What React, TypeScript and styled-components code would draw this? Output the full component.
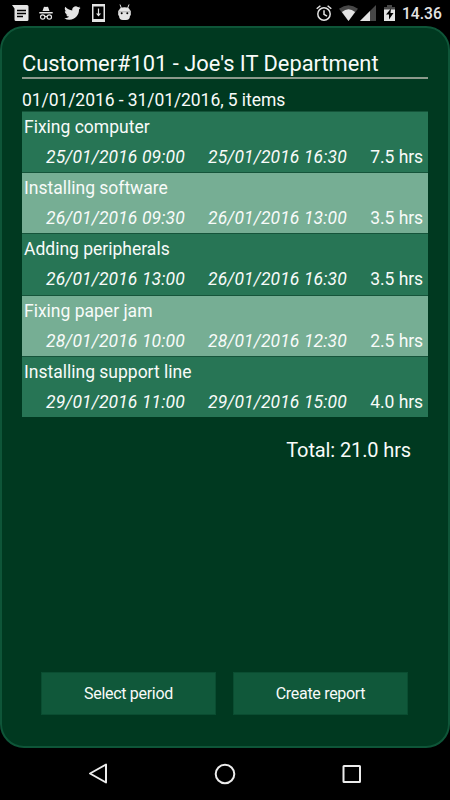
import styled, { createGlobalStyle } from "styled-components";

const GlobalStyle = createGlobalStyle`
  body {
    margin: 0;
    background: #000;
    font-family: Roboto, "Liberation Sans", sans-serif;
    color: #f8fbf9;
  }
  * {
    box-sizing: border-box;
  }
`;

interface WorkItem {
  name: string;
  start: string;
  end: string;
  hours: string;
}

const items: WorkItem[] = [
  { name: "Fixing computer", start: "25/01/2016 09:00", end: "25/01/2016 16:30", hours: "7.5 hrs" },
  { name: "Installing software", start: "26/01/2016 09:30", end: "26/01/2016 13:00", hours: "3.5 hrs" },
  { name: "Adding peripherals", start: "26/01/2016 13:00", end: "26/01/2016 16:30", hours: "3.5 hrs" },
  { name: "Fixing paper jam", start: "28/01/2016 10:00", end: "28/01/2016 12:30", hours: "2.5 hrs" },
  { name: "Installing support line", start: "29/01/2016 11:00", end: "29/01/2016 15:00", hours: "4.0 hrs" },
];

const Screen = styled.div`
  display: flex;
  flex-direction: column;
  width: 450px;
  height: 800px;
  overflow: hidden;
  white-space: nowrap;
`;

const StatusBar = styled.header`
  display: flex;
  justify-content: space-between;
  flex: none;
  height: 26px;
  padding: 0 8px 0 7px;
`;

const StatusGroup = styled.div`
  display: flex;
  align-items: center;
`;

const Icon = styled.svg`
  display: block;
  flex: none;
  fill: #e4e4e4;
`;

const Clock = styled.span`
  width: 40px;
  margin-top: 2px;
  font-size: 15.6px;
  font-weight: 500;
  line-height: 20px;
  color: #e4e4e4;
`;

const Panel = styled.main`
  display: flex;
  flex-direction: column;
  flex: none;
  height: 722px;
  padding: 22px 20px 31px;
  border: 2px solid #0e5538;
  border-radius: 24px;
  background: #003920;
`;

const Title = styled.h1`
  height: 29px;
  margin: 0;
  border-bottom: 2px solid #8c9a8c;
  font-size: 21.85px;
  font-weight: 400;
  line-height: 27px;
`;

const Period = styled.div`
  height: 32px;
  padding-top: 10px;
  font-size: 17.5px;
  letter-spacing: -0.07px;
  line-height: 22px;
`;

const List = styled.ul`
  margin: 0;
  padding: 0;
  list-style: none;
`;

const Row = styled.li<{ $light: boolean }>`
  height: 61.2px;
  padding: 3px 5px 0 2px;
  border-top: 1px solid #15543a;
  background: ${(props) => (props.$light ? "#76ae94" : "#277555")};
  font-size: 17.5px;
  line-height: 24px;
`;

const Times = styled.div`
  display: grid;
  grid-template-columns: 162px 1fr auto;
  padding: 6px 0 0 22px;
`;

const Time = styled.span`
  font-style: italic;
  letter-spacing: 0.12px;
`;

const Hours = styled.span`
  letter-spacing: -0.08px;
`;

const Total = styled.div`
  margin-top: 20px;
  padding-right: 17px;
  font-size: 20px;
  letter-spacing: -0.12px;
  line-height: 26px;
  text-align: right;
`;

const Actions = styled.div`
  display: flex;
  gap: 17px;
  margin: auto 20px 0 19px;
`;

const ActionButton = styled.button`
  flex: 1;
  height: 43px;
  padding: 1px 0 0;
  border: 1px solid #0a4d31;
  background: #10583a;
  color: inherit;
  font: 400 16px/20px Roboto, "Liberation Sans", sans-serif;
  letter-spacing: -0.3px;
`;

const NavBar = styled.nav`
  display: flex;
  justify-content: center;
  gap: 95px;
  padding-top: 10px;
`;

const NavIcon = styled.svg`
  display: block;
  fill: none;
  stroke: #ececec;
  stroke-width: 2;
`;

const MessageIcon = () => (
  <Icon width="26" height="26">
    <path d="M5 5h15a1.5 1.5 0 0 1 1.5 1.5v13a1.5 1.5 0 0 1-1.5 1.5H9a1.5 1.5 0 0 1-1.5-1.5V8.500z" />
    <path d="M10 10.500h9M10 13.500h9M10 16.500h6" stroke="#000" strokeWidth="1.300" />
  </Icon>
);

const IncognitoIcon = () => (
  <Icon width="26" height="26">
    <path d="M9.500 11l1.300-3.700q.3-.7 1-.5l1.200.3 1.200-.3q.7-.2 1 .5l1.300 3.700zM6.300 12h13.400v1.500H6.300z" />
    <g fill="none" stroke="#e4e4e4" strokeWidth="1.200">
      <circle cx="9.700" cy="17" r="2.200" />
      <circle cx="16.300" cy="17" r="2.200" />
      <path d="M11.900 16.700q1.100-.7 2.200 0" />
    </g>
  </Icon>
);

const TwitterIcon = () => (
  <Icon width="26" height="26">
    <svg x="5.200" y="4.700" width="16.500" height="16.500" viewBox="0 0 24 24">
      <path d="M23.950 4.570a10 10 0 0 1-2.820.77 4.960 4.960 0 0 0 2.160-2.720 9.900 9.900 0 0 1-3.120 1.180 4.920 4.920 0 0 0-8.380 4.480A13.930 13.930 0 0 1 1.640 3.160a4.920 4.920 0 0 0 1.520 6.570 4.900 4.900 0 0 1-2.230-.61v.06a4.920 4.920 0 0 0 3.950 4.830 5 5 0 0 1-2.210.08 4.940 4.940 0 0 0 4.600 3.420A9.870 9.870 0 0 1 0 19.540a13.990 13.990 0 0 0 7.550 2.210c9.050 0 14-7.500 14-13.980 0-.21 0-.42-.02-.63a9.940 9.940 0 0 0 2.460-2.550z" />
    </svg>
  </Icon>
);

const DownloadIcon = () => (
  <Icon width="26" height="26">
    <path d="M7 4h13v18H7zM8.500 6.500v12.500h10V6.500z" fillRule="evenodd" />
    <path d="M12.900 8.500h1.200v5h2L13.500 16.500 11 13.500h1.900z" />
  </Icon>
);

const BugDroidIcon = () => (
  <Icon width="26" height="26">
    <path d="M9 4.500l1.500 4M18 4.500l-1.500 4" stroke="#e4e4e4" strokeWidth="1" />
    <path d="M8 10.500q.5-3.300 5.500-3.300t5.500 3.300h.8v5H19q0 4.500-4 4.500h-3q-4 0-4-4.500h-.8v-5z" />
    <path d="M8 11.800h11" stroke="#999" strokeWidth=".7" />
    <circle cx="10.700" cy="13.300" r="1" fill="#000" />
    <circle cx="16.300" cy="13.300" r="1" fill="#000" />
  </Icon>
);

const AlarmIcon = () => (
  <Icon width="18" height="26">
    <g fill="none" stroke="#e4e4e4" strokeWidth="1.500">
      <circle cx="9" cy="14" r="6.200" />
      <path d="M9 10.300v4l3 1.900M1.700 8.800l3.700-3.100M16.300 8.800l-3.700-3.100" />
    </g>
  </Icon>
);

const WifiIcon = () => (
  <Icon width="21" height="26">
    <path d="M10.500 21L1 8.800Q10.500 1.500 20 8.800z" fill="#474747" />
    <path d="M10.500 21L3.900 12Q10.500 6.500 17.100 12z" />
  </Icon>
);

const SignalIcon = () => (
  <Icon width="17" height="26">
    <path d="M16 5v16H0z" fill="#474747" />
    <path d="M10 11v10H0z" />
  </Icon>
);

const BatteryIcon = () => (
  <Icon width="11" height="26">
    <path d="M3 5h5v2h3v4H0V7h3z" fill="#474747" />
    <path d="M0 9.500h11V21H0z" />
    <path d="M7 8.500L2 14.500h3v5L9.500 13H6.500z" fill="#000" />
  </Icon>
);

const ItemRow: React.FC<{ item: WorkItem; light: boolean }> = ({ item, light }) => (
  <Row $light={light}>
    <div>{item.name}</div>
    <Times>
      <Time>{item.start}</Time>
      <Time>{item.end}</Time>
      <Hours>{item.hours}</Hours>
    </Times>
  </Row>
);

const TrayIcons = styled(StatusGroup)`
  gap: 7px;
`;

const PowerIcons = styled(StatusGroup)`
  gap: 7px;
`;

const Network = styled(StatusGroup)`
  gap: 1px;
  margin-left: -2px;
`;

const App = () => (
  <Screen>
    <GlobalStyle />
    <StatusBar>
      <StatusGroup>
        <MessageIcon />
        <IncognitoIcon />
        <TwitterIcon />
        <DownloadIcon />
        <BugDroidIcon />
      </StatusGroup>
      <PowerIcons>
        <TrayIcons>
          <AlarmIcon />
          <Network>
            <WifiIcon />
            <SignalIcon />
          </Network>
          <BatteryIcon />
        </TrayIcons>
        <Clock>14.36</Clock>
      </PowerIcons>
    </StatusBar>
    <Panel>
      <Title>Customer#101 - Joe's IT Department</Title>
      <Period>01/01/2016 - 31/01/2016, 5 items</Period>
      <List>
        {items.map((item, i) => (
          <ItemRow key={item.start} item={item} light={i % 2 === 1} />
        ))}
      </List>
      <Total>Total: 21.0 hrs</Total>
      <Actions>
        <ActionButton>Select period</ActionButton>
        <ActionButton>Create report</ActionButton>
      </Actions>
    </Panel>
    <NavBar>
      <NavIcon width="32" height="32">
        <path d="M24 6.500v18L8 15.500z" strokeLinejoin="round" />
      </NavIcon>
      <NavIcon width="32" height="32">
        <circle cx="16" cy="16" r="9.300" />
      </NavIcon>
      <NavIcon width="32" height="32">
        <rect x="7.500" y="8" width="16.500" height="16" rx=".5" />
      </NavIcon>
    </NavBar>
  </Screen>
);

export default App;
